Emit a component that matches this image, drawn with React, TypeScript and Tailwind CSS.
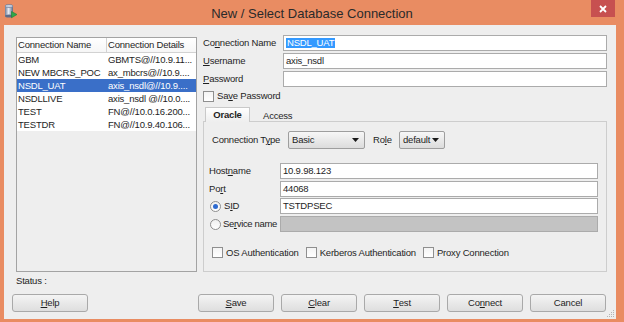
import React from "react";

const U = ({ children }: { children: React.ReactNode }) => (
  <span className="underline decoration-1 underline-offset-[1px]">{children}</span>
);

const Check = () => (
  <span className="w-[11px] h-[11px] shrink-0 border border-[#8F8F8F] bg-linear-to-b from-[#F4F4F4] to-white block" />
);

const Radio = ({ on }: { on?: boolean }) => (
  <span className="w-[11px] h-[11px] shrink-0 rounded-full border border-[#8F8F8F] bg-linear-to-b from-[#F0F0F0] to-white flex items-center justify-center">
    {on && <span className="w-[5px] h-[5px] rounded-full bg-[#2E6AD0]" />}
  </span>
);

const Field = ({
  children,
  disabled,
  className = "",
}: {
  children?: React.ReactNode;
  disabled?: boolean;
  className?: string;
}) => (
  <div
    className={`h-[16px] flex-1 flex items-center px-[2px] border border-[#ABABAB] ${
      disabled ? "bg-[#C3C3C3] border-[#A6A6A6]" : "bg-white"
    } ${className}`}
  >
    {children}
  </div>
);

const Btn = ({ children }: { children: React.ReactNode }) => (
  <div className="w-[76px] h-[18px] shrink-0 rounded-[3px] border border-[#A9A9A9] bg-linear-to-b from-[#F4F4F4] to-[#DEDEDE] flex items-center justify-center text-[#1E1E1E]">
    {children}
  </div>
);

const Select = ({ value, w }: { value: string; w: string }) => (
  <div
    className={`${w} h-[18px] shrink-0 rounded-[2px] border border-[#9E9E9E] bg-linear-to-b from-[#F7F7F7] to-[#DCDCDC] flex items-center justify-between pl-[3px] pr-[5px]`}
  >
    <span>{value}</span>
    <svg width="7" height="4" viewBox="0 0 7 4">
      <path d="M0 0H7L3.5 4Z" fill="#1a1a1a" />
    </svg>
  </div>
);

const DbIcon = () => (
  <svg width="16" height="16" viewBox="0 0 16 16">
    <defs>
      <linearGradient id="cyl" x1="0" x2="1" y1="0" y2="0">
        <stop offset="0" stopColor="#6E7C96" />
        <stop offset="0.45" stopColor="#E8ECF4" />
        <stop offset="1" stopColor="#5A6884" />
      </linearGradient>
    </defs>
    <rect x="2" y="3" width="8" height="10" fill="url(#cyl)" />
    <ellipse cx="6" cy="13" rx="4" ry="1.5" fill="#5E6C88" />
    <ellipse cx="6" cy="3" rx="4" ry="1.5" fill="#C9D2E2" stroke="#5E6C88" strokeWidth="0.6" />
    <path d="M8.5 8.5L14 11.5L8.5 14.8Z" fill="#2DA84A" stroke="#1C7E33" strokeWidth="0.6" />
  </svg>
);

const rows = [
  ["GBM", "GBMTS@//10.9.11..."],
  ["NEW MBCRS_POC", "ax_mbcrs@//10.9...."],
  ["NSDL_UAT", "axis_nsdl@//10.9...."],
  ["NSDLLIVE", "axis_nsdl @//10.0...."],
  ["TEST", "FN@//10.0.16.200..."],
  ["TESTDR", "FN@//10.9.40.106..."],
];

export default function App() {
  return (
    <div className="w-[624px] h-[322px] bg-[#E98C62] flex flex-col overflow-hidden font-['Liberation_Sans',Arial,sans-serif] text-[9.5px] tracking-[-0.2px] text-[#1E1E1E] leading-none">
      {/* Title bar */}
      <div className="h-[25px] shrink-0 grid grid-cols-[1fr_auto_1fr]">
        <div className="pl-[3px] pt-[3px]">
          <DbIcon />
        </div>
        <div className="pt-[7px] text-[13px] tracking-normal text-[#2A2A2A]">
          New / Select Database Connection
        </div>
        <div className="flex justify-end pr-[9px]">
          <div className="w-[24px] h-[17px] bg-[#C75050] flex items-center justify-center">
            <svg width="8" height="8" viewBox="0 0 8 8">
              <path d="M1 1L7 7M7 1L1 7" stroke="white" strokeWidth="1.8" />
            </svg>
          </div>
        </div>
      </div>

      {/* Body */}
      <div className="ml-[4px] mr-[8px] h-[294px] bg-[#EEEEEE] relative flex flex-col">
        <div className="flex pt-[10px] pl-[12px]">
          {/* Connection list */}
          <div className="mt-[2px] w-[181px] h-[235px] border border-[#A3A3A3] bg-[#EEEEEE] flex flex-col">
            <div className="flex h-[15px] bg-linear-to-b from-white to-[#F6F6F6] border-b border-[#D2D2D2] shrink-0">
              <div className="w-[90px] pl-[1px] border-r border-[#D2D2D2] flex items-center">Connection Name</div>
              <div className="flex-1 pl-[1px] flex items-center">Connection Details</div>
            </div>
            {rows.map(([n, d]) => {
              const sel = n === "NSDL_UAT";
              return (
                <div
                  key={n}
                  className={`flex h-[13px] shrink-0 ${sel ? "bg-[#3A6FC8] text-white" : "bg-white"}`}
                >
                  <div className="w-[90px] pl-[1px] flex items-center whitespace-nowrap overflow-hidden">{n}</div>
                  <div className="flex-1 pl-[1px] flex items-center whitespace-nowrap overflow-hidden">{d}</div>
                </div>
              );
            })}
          </div>

          {/* Right form */}
          <div className="ml-[6px] w-[404px] flex flex-col">
            <div className="flex items-center">
              <span className="w-[80px]">
                Co<U>n</U>nection Name
              </span>
              <Field>
                <span className="bg-[#3399FF] text-white px-[1px]">NSDL_UAT</span>
              </Field>
            </div>
            <div className="flex items-center mt-[2px]">
              <span className="w-[80px]">
                <U>U</U>sername
              </span>
              <Field>axis_nsdl</Field>
            </div>
            <div className="flex items-center mt-[2px]">
              <span className="w-[80px]">
                <U>P</U>assword
              </span>
              <Field />
            </div>
            <div className="flex items-center mt-[3px] h-[12px]">
              <Check />
              <span className="ml-[3px]">
                Sa<U>v</U>e Password
              </span>
            </div>

            {/* Tabs */}
            <div className="flex items-end mt-[5px] h-[15px] relative z-10">
              <div className="ml-[2px] w-[45px] h-[15px] border border-b-0 border-[#C9C9C9] bg-linear-to-b from-white to-[#EEEEEE] flex items-center justify-center font-bold">
                Oracle
              </div>
              <div className="ml-[13px] h-[13px] flex items-center">Access</div>
            </div>
            <div className="-mt-[1px] h-[151px] border border-[#CDCDCD] flex flex-col pt-[9px]">
              <div className="flex items-center h-[18px] pl-[8px]">
                <span className="w-[76px]">
                  Connection T<U>y</U>pe
                </span>
                <Select value="Basic" w="w-[77px]" />
                <span className="ml-[8px] w-[26px]">
                  Ro<U>l</U>e
                </span>
                <Select value="default" w="w-[46px]" />
              </div>

              <div className="flex flex-col pl-[5px] w-[394px] mt-[14px]">
                <div className="flex items-center">
                  <span className="w-[71px]">
                    Host<U>n</U>ame
                  </span>
                  <Field>10.9.98.123</Field>
                </div>
                <div className="flex items-center mt-[2px]">
                  <span className="w-[71px]">
                    Po<U>r</U>t
                  </span>
                  <Field>44068</Field>
                </div>
                <div className="flex items-center mt-[1px]">
                  <span className="w-[71px] flex items-center pl-[1px]">
                    <Radio on />
                    <span className="ml-[3px]">
                      S<U>I</U>D
                    </span>
                  </span>
                  <Field>TSTDPSEC</Field>
                </div>
                <div className="flex items-center mt-[2px]">
                  <span className="w-[71px] flex items-center pl-[1px]">
                    <Radio />
                    <span className="ml-[2px] whitespace-nowrap tracking-[-0.35px]">
                      Se<U>r</U>vice name
                    </span>
                  </span>
                  <Field disabled />
                </div>
              </div>

              <div className="flex items-center pl-[8px] mt-[15px] h-[11px]">
                <Check />
                <span className="ml-[3px]">OS Authentication</span>
                <span className="ml-[7px]">
                  <Check />
                </span>
                <span className="ml-[3px]">Kerberos Authentication</span>
                <span className="ml-[7px]">
                  <Check />
                </span>
                <span className="ml-[3px]">Proxy Connection</span>
              </div>
            </div>
          </div>
        </div>

        {/* Status */}
        <div className="pl-[12px] mt-[3px] h-[12px] flex items-center">Status :</div>

        {/* Buttons */}
        <div className="flex pl-[8px] mt-[7px] gap-[7px]">
          <Btn>
            <U>H</U>elp
          </Btn>
          <div className="w-[96px] shrink-0" />
          <Btn>
            <U>S</U>ave
          </Btn>
          <Btn>
            <U>C</U>lear
          </Btn>
          <Btn>
            <U>T</U>est
          </Btn>
          <Btn>
            Co<U>n</U>nect
          </Btn>
          <Btn>Cancel</Btn>
        </div>

        {/* resize grip */}
        <svg className="absolute right-[1px] bottom-[1px]" width="8" height="8" viewBox="0 0 8 8">
          <g fill="#B5B5B5">
            <rect x="6" y="0" width="1" height="1" />
            <rect x="4" y="2" width="1" height="1" />
            <rect x="6" y="2" width="1" height="1" />
            <rect x="2" y="4" width="1" height="1" />
            <rect x="4" y="4" width="1" height="1" />
            <rect x="6" y="4" width="1" height="1" />
            <rect x="0" y="6" width="1" height="1" />
            <rect x="2" y="6" width="1" height="1" />
            <rect x="4" y="6" width="1" height="1" />
            <rect x="6" y="6" width="1" height="1" />
          </g>
        </svg>
      </div>
    </div>
  );
}
